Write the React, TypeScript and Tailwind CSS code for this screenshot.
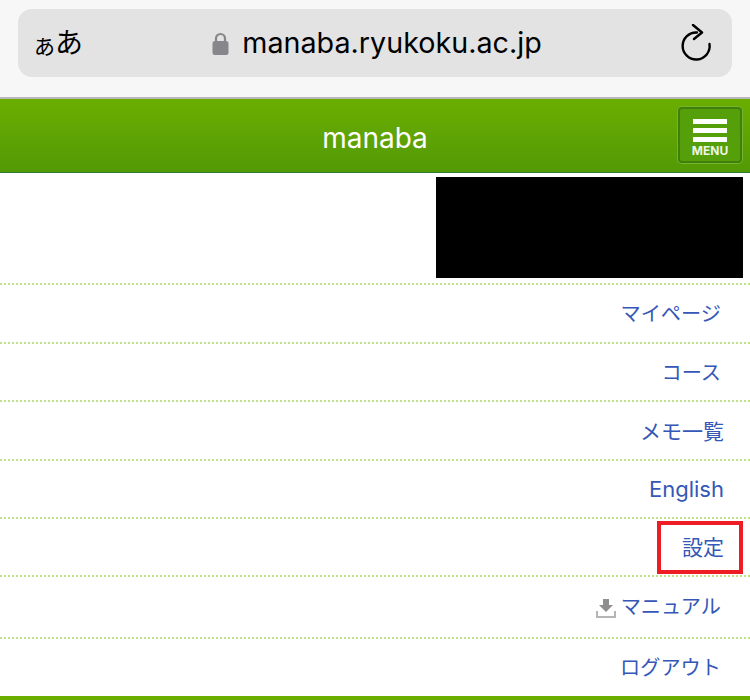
const NavRow = ({ label, height, size = "text-[20.2px] pr-[29px] pt-[1px]", children }: { label: string; height: string; size?: string; children?: React.ReactNode }) => (
  <div className={`flex items-center justify-end gap-[5px] border-b-2 border-dotted border-[#bfe28a] leading-none text-[#3557b7] ${height} ${size}`}>
    {children}
    <span>{label}</span>
  </div>
);

const App = () => {
  return (
    <div className="h-[700px] w-[750px] overflow-hidden bg-white font-['Inter','Noto_Sans_CJK_JP',sans-serif]">
      <div className="h-[99px] border-b-2 border-[#b9b9bb] bg-[#f7f7f7] px-[18px] pt-[9px]">
        <div className="flex h-[68px] items-center justify-between rounded-[14px] bg-[#e3e3e4] pl-[16px] pr-[20px]">
          <div className="flex items-end text-black">
            <span className="text-[21px] leading-none">あ</span>
            <span className="text-[28px] leading-none">あ</span>
          </div>
          <div className="ml-[-9px] flex items-center gap-[13px] pt-[1px]">
            <svg width="17" height="25" viewBox="0 0 17 25">
              <path d="M4 11V7.5a4.5 4.5 0 0 1 9 0V11" fill="none" stroke="#87878b" strokeWidth="2.2" />
              <rect x="0.5" y="10" width="16" height="14" rx="2.5" fill="#87878b" />
            </svg>
            <span className="text-[28.7px] leading-none text-black">manaba.ryukoku.ac.jp</span>
          </div>
          <svg width="32" height="38" viewBox="0 0 32 38" fill="none" stroke="black" strokeWidth="2.4" strokeLinecap="round" strokeLinejoin="round">
            <path d="M17 8.5A13.5 13.5 0 1 0 29.5 20" />
            <path d="M13 1l9 7.5-8 6.5" />
          </svg>
        </div>
      </div>

      <div className="relative flex h-[74px] items-center justify-center border-b border-[#2f7a3a] bg-gradient-to-b from-[#6bae00] to-[#529a06] pt-[5px]">
        <span className="text-[28px] leading-none text-white">manaba</span>
        <div className="absolute right-[8px] top-[8px] flex h-[56px] w-[64px] flex-col items-center rounded-[4px] border-2 border-[#417f0a] bg-[#55a00a] pt-[10px] ring-1 ring-[#72b42c]">
          <div className="mb-[4px] h-[5px] w-[34px] bg-white" />
          <div className="mb-[4px] h-[5px] w-[34px] bg-white" />
          <div className="h-[5px] w-[34px] bg-white" />
          <span className="mt-[3px] text-[12px] font-bold leading-none text-[#eef5e2]">MENU</span>
        </div>
      </div>

      <div className="flex h-[112px] justify-end border-b-2 border-dotted border-[#bfe28a] pr-[7px] pt-[4px]">
        <div className="h-[101px] w-[307px] bg-black" />
      </div>

      <NavRow label="マイページ" height="h-[59px]" />
      <NavRow label="コース" height="h-[58px]" size="text-[20.2px] pr-[29px] pt-[3px]" />
      <NavRow label="メモ一覧" height="h-[59px]" size="text-[21px] pr-[26px] pt-[1px]" />
      <NavRow label="English" height="h-[58px]" size="text-[22px] pr-[26px] pb-[1px]" />
      <div className="relative">
        <NavRow label="設定" height="h-[58px]" size="text-[21px] pr-[26px] pt-[1px]" />
        <div className="absolute right-[7px] top-[2px] h-[53px] w-[86px] border-4 border-[#ee1c25]" />
      </div>
      <NavRow label="マニュアル" height="h-[62px]" size="text-[20.2px] pr-[29px] pt-[1px]">
        <svg width="20" height="20" viewBox="0 0 20 20">
          <path d="M7 1h6v6h4l-7 7-7-7h4z" fill="#8f8f8f" />
          <path d="M1 13v6h18v-6" fill="none" stroke="#b5b5b5" strokeWidth="2" />
        </svg>
      </NavRow>
      <div className="flex h-[57px] items-center justify-end pr-[29px] pt-[2px] text-[20.2px] leading-none text-[#3557b7]">
        <span>ログアウト</span>
      </div>
      <div className="h-[5px] bg-[#6bae00]" />
    </div>
  );
};

export default App;
